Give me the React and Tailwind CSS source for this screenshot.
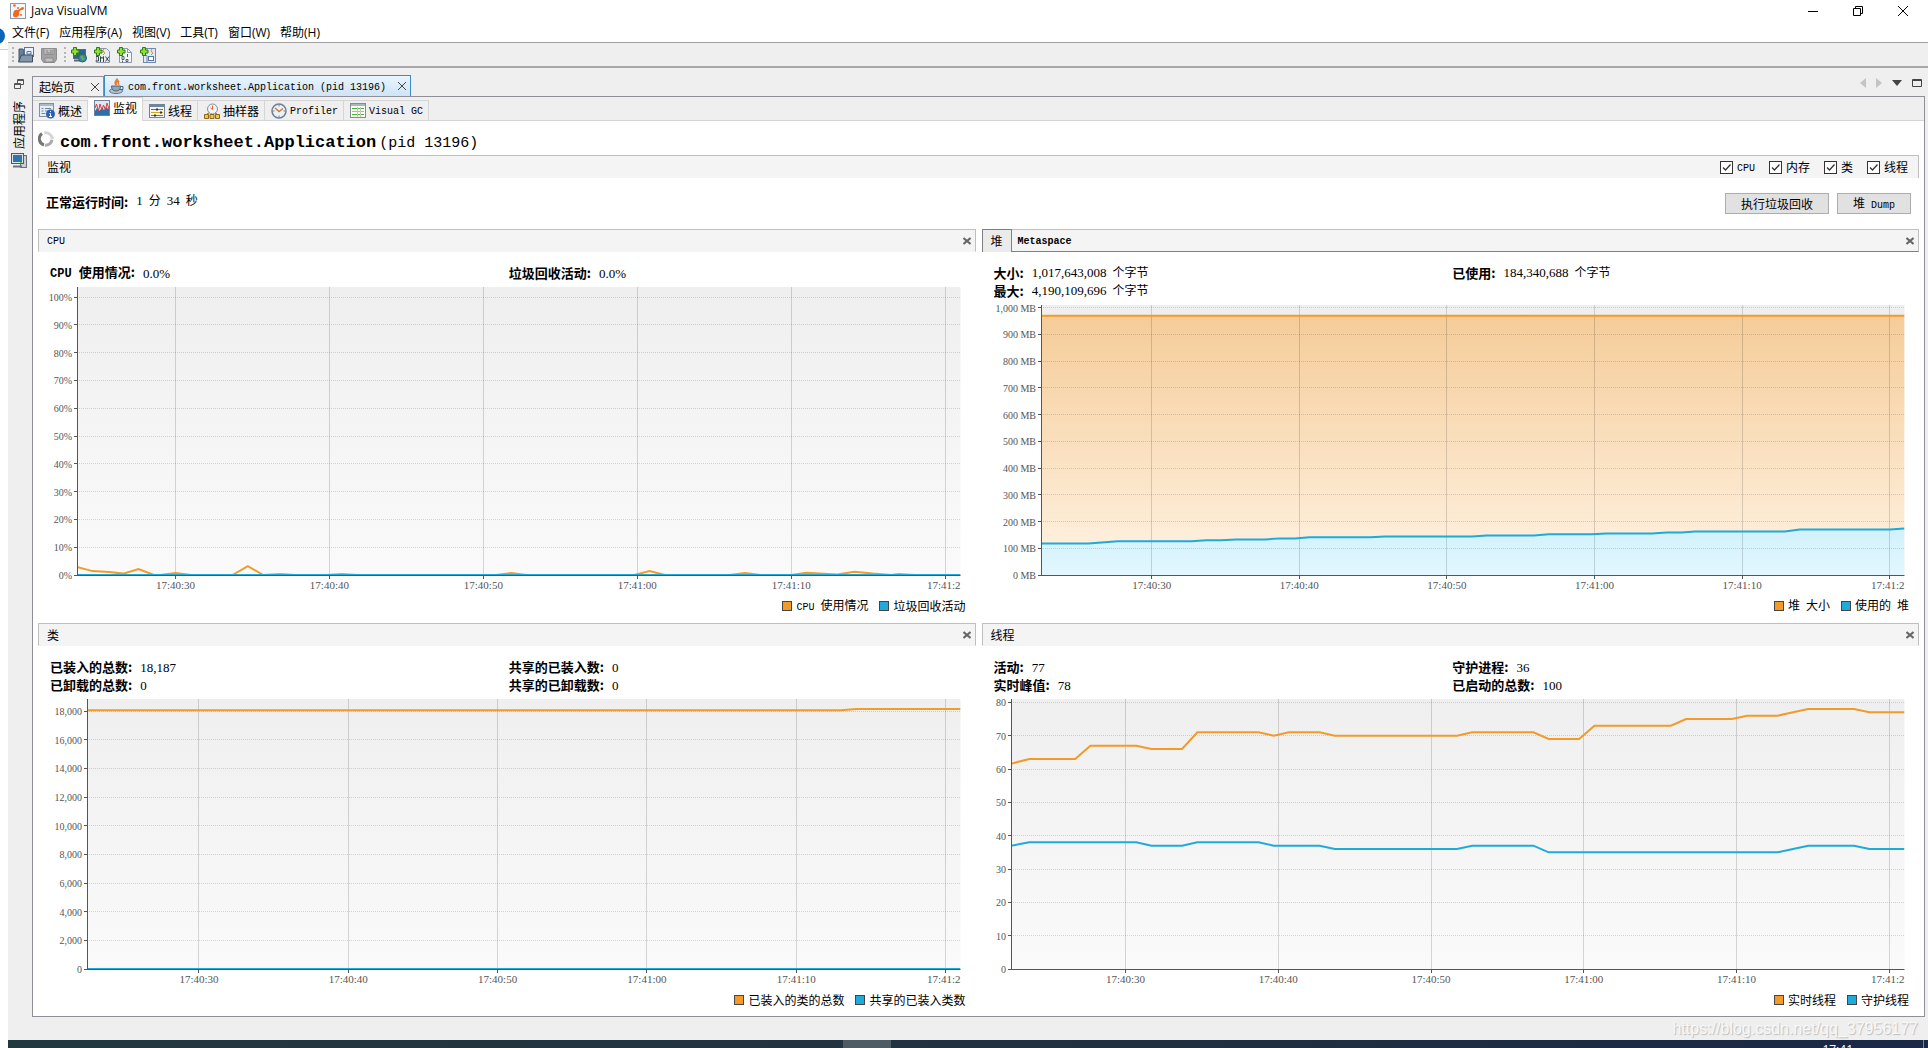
import { useId, useState } from 'react'

const ORANGE = '#f39a28'
const BLUE = '#1eaadb'

const CPU = [[23.6, 2.9], [24.6, 1.4], [25.7, 1.1], [26.6, 0.5], [27.6, 2.1], [28.6, 0], [29, 0], [30, 0.7], [31, 0], [33.7, 0], [34.7, 3.2], [35.7, 0], [36.8, 0.4], [37.8, 0], [39.8, 0], [40.8, 0.4], [41.8, 0], [50.8, 0], [51.8, 0.7], [52.8, 0], [59.8, 0], [60.8, 1.4], [61.8, 0], [66, 0], [67, 0.7], [68, 0], [70, 0], [71, 0.8], [73, 0.2], [74.1, 1.2], [75.3, 0.5], [76.5, 0], [77, 0.4], [78, 0], [81, 0]]
const GC = [[23.6, 0], [81, 0]]

const HEAP_SIZE = [[22.5, 970], [81, 970]]
const HEAP_USED = [[22.5, 118], [25.7, 118], [27.7, 126], [32.7, 126], [33.7, 130], [34.7, 130], [35.7, 133], [37.7, 133], [38.7, 137], [39.7, 137], [40.7, 141], [44.8, 141], [45.8, 144], [51.7, 144], [52.7, 148], [55.9, 148], [56.9, 152], [59.8, 152], [60.8, 155], [63.9, 155], [64.9, 159], [65.9, 159], [66.8, 163], [72.9, 163], [73.9, 170], [80, 170], [81, 174]]

const CLASSES = [[22.5, 18060], [73, 18060], [74, 18160], [81, 18160]]
const SHARED = [[22.5, 0], [81, 0]]

const LIVE = [[22.5, 61.6], [23.7, 63], [26.7, 63], [27.7, 67], [30.7, 67], [31.7, 66], [33.7, 66], [34.7, 71], [38.7, 71], [39.7, 70], [40.7, 71], [42.7, 71], [43.7, 70], [51.7, 70], [52.7, 71], [56.7, 71], [57.7, 69], [59.7, 69], [60.7, 73], [65.7, 73], [66.7, 75], [69.7, 75], [70.7, 76], [72.7, 76], [73.7, 77], [74.7, 78], [77.7, 78], [78.7, 77], [81, 77]]
const DAEMON = [[22.5, 37], [23.7, 38], [30.7, 38], [31.7, 37], [33.7, 37], [34.7, 38], [38.7, 38], [39.7, 37], [42.7, 37], [43.7, 36], [51.7, 36], [52.7, 37], [56.7, 37], [57.7, 35], [72.7, 35], [73.7, 36], [74.7, 37], [77.7, 37], [78.7, 36], [81, 36]]

const TIMES = [[30, '17:40:30'], [40, '17:40:40'], [50, '17:40:50'], [60, '17:41:00'], [70, '17:41:10']]
const LAST_TIME = 80

const range = (n, step) => Array.from({ length: n + 1 }, (_, i) => i * step)

// Latin runs are set narrower than the Chinese glyphs around them
function Mixed({ text }) {
  return text.split(/([\x20-\x7e]+)/).map((part, i) =>
    i % 2 ? <span key={i} className="font-['Liberation_Mono',monospace] text-[10px]">{part}</span> : part
  )
}

function Value({ text }) {
  return text.split(/([\d,.%]+)/).map((part, i) =>
    i % 2
      ? <span key={i} className="font-['Liberation_Serif',serif] text-[13px]">{part}</span>
      : <Mixed key={i} text={part} />
  )
}

function Chart({ label, start, max, ticks, format, series, filled, className }) {
  const id = useId()
  const end = 81
  const x = (t) => `${((t - start) / (end - start)) * 100}%`
  const y = (v) => `${(1 - v / max) * 100}%`
  const line = (pts) => pts.map(([t, v]) => `${t - start},${max - v}`).join(' ')
  const times = [...TIMES.map(([t]) => t), LAST_TIME]

  return (
    <div className={`mr-[15px] pb-[18px] ${className}`}>
      <svg role="img" aria-label={label} className="block h-full w-full overflow-visible font-['Liberation_Serif',serif]" fill="#555">
        <defs>
          <linearGradient id={`${id}bg`} x1="0" y1="0" x2="0" y2="1">
            <stop offset="0" stopColor="#efefef" />
            <stop offset="1" stopColor="#fafafa" />
          </linearGradient>
          <linearGradient id={`${id}0`} x1="0" y1="0" x2="0" y2="1">
            <stop offset="0" stopColor="#f5cc99" />
            <stop offset="1" stopColor="#fff3e4" />
          </linearGradient>
          <linearGradient id={`${id}1`} x1="0" y1="0" x2="0" y2="1">
            <stop offset="0" stopColor="#d2f1fb" />
            <stop offset="1" stopColor="#e2f7ff" />
          </linearGradient>
        </defs>
        <rect width="100%" height="100%" fill={`url(#${id}bg)`} />
        {filled && (
          <svg width="100%" height="100%" viewBox={`0 0 ${end - start} ${max}`} preserveAspectRatio="none">
            {series.map((s, i) => (
              <polygon key={i} points={`0,${max} ${line(s.points)} ${end - start},${max}`} fill={`url(#${id}${i})`} />
            ))}
          </svg>
        )}
        <g stroke="#000" strokeOpacity="0.15" shapeRendering="crispEdges">
          {ticks.map(v => <line key={v} x1="0" x2="100%" y1={y(v)} y2={y(v)} strokeDasharray="1 1" />)}
          {times.map(t => <line key={t} x1={x(t)} x2={x(t)} y1="0" y2="100%" />)}
        </g>
        <svg width="100%" height="100%" viewBox={`0 0 ${end - start} ${max}`} preserveAspectRatio="none" fill="none">
          {series.map(s => (
            <polyline key={s.name} points={line(s.points)} stroke={s.color} strokeWidth="2" vectorEffect="non-scaling-stroke" />
          ))}
        </svg>
        <rect width="1" height="100%" />
        <rect y="100%" width="100%" height="1" />
        <g stroke="#555" shapeRendering="crispEdges">
          {ticks.map(v => <line key={v} x1="-3" x2="0" y1={y(v)} y2={y(v)} />)}
          <g transform="translate(0 4)">
            {times.map(t => <line key={t} x1={x(t)} x2={x(t)} y1="99%" y2="100%" />)}
          </g>
        </g>
        {ticks.map(v => <text key={v} x="-5" y={y(v)} dy="4" textAnchor="end" fontSize="10">{format(v)}</text>)}
        <g transform="translate(0 14)" fontSize="11">
          {TIMES.map(([t, name]) => <text key={t} x={x(t)} y="100%" textAnchor="middle">{name}</text>)}
          <text x="100%" y="100%" textAnchor="end">17:41:2</text>
        </g>
      </svg>
    </div>
  )
}

function CloseMark() {
  return (
    <svg viewBox="0 0 8 8" className="size-2" stroke="#666" strokeWidth="2">
      <path d="M0.5 1l7 6M7.5 1l-7 6" />
    </svg>
  )
}

function Panel({ title, tabs, stats, children, series }) {
  return (
    <section className="flex min-w-0 flex-col">
      <header className={`flex h-[23px] items-center border border-[#bfbfbf] bg-[#f4f4f4] pr-1 ${tabs ? 'border-b-[#808080]' : 'border-b-[#f4f4f4]'}`}>
        {tabs ? (
          <>
            <button className="-my-px -ml-px h-[23px] border border-[#808080] border-b-0 bg-[#ebebeb] px-2"><Mixed text={tabs[0]} /></button>
            <button className="px-[6px] font-bold"><Mixed text={tabs[1]} /></button>
          </>
        ) : (
          <h3 className="pl-2"><Mixed text={title} /></h3>
        )}
        <button aria-label="关闭" className="ml-auto"><CloseMark /></button>
      </header>
      <dl className="grid grid-cols-2 pt-3 pr-2 pb-[5px] pl-3">
        {stats.map(([name, value]) => (
          <div key={name} className="flex h-[18px] items-center gap-2">
            <dt className="text-[13px] font-bold">
              {name.split(/([A-Z]+ )/).map((p, i) => i % 2 ? <span key={i} className="font-['Liberation_Mono',monospace] text-[12px]">{p}</span> : p)}:
            </dt>
            <dd><Value text={value} /></dd>
          </div>
        ))}
      </dl>
      {children}
      <ul className="flex h-[26px] items-center justify-end gap-[11px] pr-[10px]">
        {series.map(s => (
          <li key={s.name} className="flex items-center gap-1">
            <span className={`size-[10px] border border-[#444] ${s.color === ORANGE ? 'bg-[#f39a28]' : 'bg-[#1eaadb]'}`} />
            <span><Mixed text={s.name} /></span>
          </li>
        ))}
      </ul>
    </section>
  )
}

/* icons */

const Plus = () => (
  <path d="M2.5 0.5h3v2.500h2.500v3h-2.500v2.500h-3v-2.500H0.500v-3h2z" fill="#8fe03a" stroke="#2b7a12" />
)

const Icon = ({ children, className = 'size-4' }) => (
  <svg viewBox="0 0 16 16" className={`shrink-0 ${className}`} fill="none" aria-hidden="true">{children}</svg>
)

const LogoIcon = () => (
  <Icon>
    <rect x="0.5" y="0.5" width="15" height="15" fill="#f3f7fa" stroke="#8e9aa8" />
    <path d="M4 8q2-2 4-1l3-2q2-2 3 0 0 2-3 2l-2 2q1 4-2 5-4 1-4-2 0-2 1-4z" fill="#ef6a1f" />
    <circle cx="4.500" cy="2.500" r="1.300" fill="#ef6a1f" />
    <circle cx="8" cy="5" r="1" fill="#ef6a1f" />
    <circle cx="11" cy="12" r="1" fill="#ef6a1f" />
  </Icon>
)

const OpenIcon = () => (
  <Icon>
    <path d="M1 14V2h4l1 2v10z" fill="#6d8093" stroke="#43566a" />
    <rect x="6.500" y="0.500" width="9" height="9" fill="#eaf2fb" stroke="#5377a0" />
    <path d="M9 4.500h4v2.500h-4z" stroke="#5377a0" />
    <path d="M0.500 15l3-7h11v7z" fill="#8397a8" stroke="#3b4e61" />
  </Icon>
)

const SaveIcon = () => (
  <Icon>
    <path d="M0.500 1.500h15v11l-2 3H2.500l-2-3z" fill="#a2a2a2" stroke="#8c8c8c" />
    <path d="M3 1.500h10v6H3z" fill="#bdbdbd" stroke="#909090" />
    <path d="M5 4h2M9 4h3M5 6h7" stroke="#858585" />
    <path d="M4 11h8v4H4z" fill="#c2c2c2" stroke="#8a8a8a" />
  </Icon>
)

const AddHostIcon = () => (
  <Icon>
    <rect x="2.500" y="2.500" width="12" height="9" fill="#2c6390" stroke="#58697a" />
    <path d="M3 13.500h7" stroke="#58697a" strokeWidth="2" />
    <circle cx="11.500" cy="11" r="4" fill="#3d83b5" stroke="#2d6a4a" />
    <path d="M9 10q2-2 3-1 0 2 2 3-2 2-3 1 0-2-2-3z" fill="#62b34b" />
    <Plus />
  </Icon>
)

const AddJmxIcon = () => (
  <Icon>
    <path d="M4.500 1.500h8l3 3v11h-13v-9z" fill="#e8eef5" stroke="#8a98a8" />
    <path d="M10 2q-2 2 0 3t-1 3" stroke="#ee7b22" />
    <path d="M2 9.500h2.500v4.500H1.500M6.500 15V9.500l1.500 2 1.500-2V15M11.500 9.500l3.500 5M15 9.500l-3.500 5" stroke="#3c4650" />
    <Plus />
  </Icon>
)

const AddDumpIcon = () => (
  <Icon>
    <path d="M4.500 1.500h6l4 4v10h-12v-9z" fill="#f2f5f9" stroke="#8a98a8" />
    <path d="M10.500 1.500v4h4" stroke="#8a98a8" />
    <path d="M5 9.500h2v3H5zM10.500 7v3M5.500 13.500v2M9 12.500h2v2H9z" stroke="#4f6478" />
    <Plus />
  </Icon>
)

const AddSnapshotIcon = () => (
  <Icon>
    <rect x="3.500" y="1.500" width="12" height="14" fill="#dfe9f5" stroke="#6f8bad" />
    <path d="M12 2q-2 2 0 3t-1 3" stroke="#ee7b22" />
    <rect x="8.500" y="9.500" width="5" height="4" fill="#fff" stroke="#5377a0" />
    <path d="M3 8.500h4v7" stroke="#6f8bad" />
    <Plus />
  </Icon>
)

const JavaIcon = () => (
  <Icon>
    <path d="M8 0q-4 4-2 7h2q-1-2 1-3t-1-4z" fill="#ee7b22" />
    <path d="M10 3q-2 2 0 4" stroke="#e05a10" />
    <ellipse cx="7" cy="13" rx="6.500" ry="2.500" fill="#b9c6d1" stroke="#5c7387" />
    <path d="M2.500 8h9q0 5-4.500 5t-4.500-5z" fill="#8fa7ba" stroke="#4d667b" />
    <path d="M11.500 8.500h2.500v3h-3" stroke="#4d667b" />
  </Icon>
)

const OverviewIcon = () => (
  <Icon>
    <rect x="0.500" y="0.500" width="14" height="13" fill="#e6edf5" stroke="#7d90a5" />
    <path d="M1 2h13" stroke="#a8b9cc" strokeWidth="2" />
    <path d="M2.500 5.500h2M6 5.500h6M2.500 8h2M6 8h3M2.500 10.500h4" stroke="#71859a" />
    <circle cx="11.500" cy="11" r="4.500" fill="#2a63ad" />
    <path d="M11.500 8v1M10.500 10.500h1v3M10 13.500h3" stroke="#fff" />
  </Icon>
)

const MonitorIcon = () => (
  <Icon>
    <rect x="0.500" y="0.500" width="15" height="15" fill="#dce8f4" stroke="#6f8297" />
    <path d="M1 11l2-3 2 3 3-3 2 2 2-3 2 2 1-1v7H1z" fill="#2f6fa8" />
    <path d="M1 8l1.500-4 2 7 1.500-7 2 6 1.500-5 2 5 1.500-7 2 6" stroke="#dd3b3b" />
  </Icon>
)

const ThreadsIcon = () => (
  <Icon>
    <rect x="0.500" y="1.500" width="15" height="13" fill="#f3f4ee" stroke="#70859b" />
    <path d="M1 3h14" stroke="#70859b" strokeWidth="2" />
    <path d="M2 6.500h12M2 12.500h12" stroke="#3f9a2f" />
    <path d="M2 9.500h12" stroke="#d4a917" />
    <path d="M7 6.500h2M11 9.500h2M5 12.500h2" stroke="#333" strokeWidth="2" />
  </Icon>
)

const SamplerIcon = () => (
  <Icon>
    <circle cx="8.500" cy="6" r="5" fill="#eff3f8" stroke="#8092a6" />
    <path d="M8.500 2.500V6.500L6.500 5" stroke="#e06a20" />
    <path d="M3 11l2-1M13 11l-2-1" stroke="#8d6718" />
    <path d="M0.500 11.500h4v4h-4zM6 11.500h4v4H6zM11.500 11.500h4v4h-4z" fill="#f1c84c" stroke="#8d6718" />
  </Icon>
)

const ProfilerIcon = () => (
  <Icon>
    <circle cx="8" cy="8" r="7" fill="#e9f1f9" stroke="#6d7f93" strokeWidth="1.500" />
    <path d="M8 2v1.500M8 12.500V14M2 8h1.500M12.500 8H14" stroke="#6d7f93" />
    <path d="M4 5L8 8.500l4-3" stroke="#e2702c" strokeWidth="1.500" />
  </Icon>
)

const VisualGcIcon = () => (
  <Icon>
    <rect x="0.500" y="0.500" width="15" height="14" fill="#fbfbf5" stroke="#828c94" />
    <path d="M1 2h14" stroke="#a9b6c2" strokeWidth="2" />
    <path d="M2 5.500h12" stroke="#49b33a" />
    <path d="M2 8.500h12" stroke="#e4b523" />
    <path d="M2 11.500h12" stroke="#49b33a" />
    <path d="M7.500 4v10M10.500 4v10" stroke="#c8c8c0" />
  </Icon>
)

const ComputerIcon = () => (
  <Icon>
    <rect x="9.500" y="2.500" width="6" height="12" fill="#c9ced3" stroke="#6a737c" />
    <rect x="0.500" y="0.500" width="12" height="10" fill="#dfe3e6" stroke="#4d5a66" />
    <rect x="2" y="2" width="9" height="7" fill="#2f74ad" />
    <path d="M2 13.500h9" stroke="#6a737c" strokeWidth="2" />
    <path d="M9 9.500h2" stroke="#5fd43b" />
  </Icon>
)

const MENU = ['文件(F)', '应用程序(A)', '视图(V)', '工具(T)', '窗口(W)', '帮助(H)']

const VIEWS = [
  ['概述', OverviewIcon],
  ['监视', MonitorIcon],
  ['线程', ThreadsIcon],
  ['抽样器', SamplerIcon],
  ['Profiler', ProfilerIcon],
  ['Visual GC', VisualGcIcon],
]

function Check({ label }) {
  const [on, setOn] = useState(true)
  return (
    <label className="flex items-center gap-1">
      <span className="grid size-[13px]">
        <input type="checkbox" checked={on} onChange={(e) => setOn(e.target.checked)} className="size-[13px] appearance-none border border-[#333] bg-white [grid-area:1/1]" />
        {on && (
          <svg viewBox="0 0 13 13" className="pointer-events-none size-[13px] [grid-area:1/1]" fill="none" stroke="#333">
            <path d="M3 6.500l2.500 2.500L10.500 3.500" strokeWidth="1.300" />
          </svg>
        )}
      </span>
      <span><Mixed text={label} /></span>
    </label>
  )
}

const Grip = () => <span className="h-[15px] border-l-2 border-dotted border-[#b5b5b5]" />

export default function App() {
  const cpu = [{ name: 'CPU 使用情况', color: ORANGE, points: CPU }, { name: '垃圾回收活动', color: BLUE, points: GC }]
  const heap = [{ name: '堆 大小', color: ORANGE, points: HEAP_SIZE }, { name: '使用的 堆', color: BLUE, points: HEAP_USED }]
  const classes = [{ name: '已装入的类的总数', color: ORANGE, points: CLASSES }, { name: '共享的已装入类数', color: BLUE, points: SHARED }]
  const threads = [{ name: '实时线程', color: ORANGE, points: LIVE }, { name: '守护线程', color: BLUE, points: DAEMON }]

  return (
    <div className="flex min-h-screen overflow-hidden bg-white font-['Noto_Sans_CJK_SC',sans-serif] text-[12px] leading-[18px] text-black">
      <div className="w-2 shrink-0 overflow-hidden pt-7">
        <div className="-ml-[11px] size-4 rounded-full bg-[#0a64b8]" />
        <div className="mt-[5px] h-px bg-[#d0d0d0]" />
      </div>

      <div className="flex min-w-0 flex-1 flex-col bg-[#efefef]">
        <div className="flex h-[22px] items-center bg-white pr-5 pl-[2px] font-['Open_Sans',sans-serif]">
          <LogoIcon />
          <h1 className="ml-[5px]">Java VisualVM</h1>
          <div className="ml-auto flex items-center gap-[35px]">
            <button aria-label="最小化"><svg viewBox="0 0 10 10" className="size-[10px]" stroke="#000"><path d="M0 5.500h10" /></svg></button>
            <button aria-label="还原"><svg viewBox="0 0 10 10" className="size-[10px]" fill="none" stroke="#000"><path d="M0.500 2.500h7v7h-7zM2.500 2.500v-2h7v7h-2" /></svg></button>
            <button aria-label="关闭"><svg viewBox="0 0 10 10" className="size-[10px]" stroke="#000"><path d="M0 0l10 10M10 0L0 10" /></svg></button>
          </div>
        </div>
        <nav className="flex h-5 items-center gap-[10px] bg-white pt-[2px] pl-1 font-['Open_Sans','Noto_Sans_CJK_SC',sans-serif]">
          {MENU.map(m => <button key={m} className="whitespace-nowrap">{m}</button>)}
        </nav>

        <div className="flex h-[26px] items-center border-t border-b-2 border-t-[#a0a0a0] border-b-[#a8a8a8] pl-1">
          <Grip />
          <button aria-label="打开" className="ml-1"><OpenIcon /></button>
          <button aria-label="保存" className="ml-[7px]"><SaveIcon /></button>
          <span className="ml-[7px] flex"><Grip /></span>
          <div className="ml-[5px] flex gap-[7px]">
            <button aria-label="添加远程主机"><AddHostIcon /></button>
            <button aria-label="添加 JMX 连接"><AddJmxIcon /></button>
            <button aria-label="添加 VM 核心 dump"><AddDumpIcon /></button>
            <button aria-label="添加快照"><AddSnapshotIcon /></button>
          </div>
        </div>

        <div className="flex flex-1 pr-[3px]">
          <aside className="flex w-6 shrink-0 flex-col items-center pt-[11px] pr-[2px]">
            <button aria-label="还原窗口组">
              <svg viewBox="0 0 10 10" className="size-[10px]" fill="none" stroke="#555">
                <path d="M3.500 0.500h6v5h-6zM0.500 4.500h6v5h-6z" fill="#efefef" /><path d="M3 1.500h7M0 5.500h7" />
              </svg>
            </button>
            <button className="mt-3 flex flex-col items-center gap-1">
              <span className="rotate-180 [writing-mode:vertical-rl] [text-orientation:sideways]">应用程序</span>
              <ComputerIcon />
            </button>
          </aside>

          <div className="flex min-w-0 flex-1 flex-col">
            <div className="flex h-7 items-end">
              <div className="flex h-5 w-[72px] items-center border border-b-0 border-[#8e8f99] bg-[#f0f0f0] pr-1 pl-[6px]">
                <button>起始页</button>
                <button aria-label="关闭" className="ml-auto"><svg viewBox="0 0 8 8" className="size-2" stroke="#444"><path d="M0 0l8 8M8 0L0 8" /></svg></button>
              </div>
              <div className="flex h-[21px] w-[307px] items-center border border-b-0 border-[#3c8cc8] bg-linear-to-b from-[#e9f5fe] to-[#cfe4f6] pr-1 pl-1">
                <JavaIcon />
                <button className="ml-[3px] whitespace-nowrap"><Mixed text="com.front.worksheet.Application (pid 13196)" /></button>
                <button aria-label="关闭" className="ml-auto"><svg viewBox="0 0 8 8" className="size-2" stroke="#444"><path d="M0 0l8 8M8 0L0 8" /></svg></button>
              </div>
              <div className="mr-[3px] mb-2 ml-auto flex items-center gap-[10px]">
                <button aria-label="向左滚动"><svg viewBox="0 0 6 10" className="h-[10px] w-[6px]" fill="#c4c4c4"><path d="M6 0v10L0 5z" /></svg></button>
                <button aria-label="向右滚动"><svg viewBox="0 0 6 10" className="h-[10px] w-[6px]" fill="#c4c4c4"><path d="M0 0v10l6-5z" /></svg></button>
                <button aria-label="显示列表"><svg viewBox="0 0 10 6" className="h-[6px] w-[10px]" fill="#444"><path d="M0 0h10L5 6z" /></svg></button>
                <button aria-label="最大化"><svg viewBox="0 0 10 8" className="h-2 w-[10px]" fill="none" stroke="#444"><path d="M0.500 0.500h9v7h-9zM0 1.500h10" /></svg></button>
              </div>
            </div>

            <main className="flex flex-1 flex-col border border-[#8e8f99] bg-white">
              <div className="flex h-6 items-end border-b border-[#d5d5d5] bg-[#efefef]">
                {VIEWS.map(([name, ViewIcon], i) => (
                  <button
                    key={name}
                    className={`flex items-center gap-[3px] whitespace-nowrap border-t border-r border-[#d5d5d5] pr-[5px] pl-[6px] ${i === 1 ? '-mb-px h-6 bg-white pb-1' : 'h-5'}`}
                  >
                    <ViewIcon />
                    <span><Mixed text={name} /></span>
                  </button>
                ))}
              </div>

              <div className="flex h-[34px] items-center pt-[10px] pl-[5px] font-['Liberation_Mono',monospace]">
                <svg viewBox="0 0 16 16" className="mb-2 size-4" fill="none" strokeWidth="3">
                  <path d="M4 2.500a6.500 6.500 0 0 0 2 11.500" stroke="#777" />
                  <path d="M7 14.300a6.500 6.500 0 0 0 7-5.500" stroke="#aaa" />
                  <path d="M14.300 8a6.500 6.500 0 0 0-8-6" stroke="#d5d5d5" />
                </svg>
                <h2 className="ml-[6px] flex items-baseline gap-[3px] text-[17px] font-bold">
                  com.front.worksheet.Application
                  <span className="text-[15px] font-normal">(pid 13196)</span>
                </h2>
              </div>

              <div className="mr-[5px] ml-[5px] flex flex-1 flex-col">
                <div className="flex h-[23px] items-center justify-between border border-b-0 border-[#bfbfbf] bg-[#f4f4f4] pr-[10px] pl-2">
                  <h3>监视</h3>
                  <div className="flex gap-[14px]">
                    {['CPU', '内存', '类', '线程'].map(l => <Check key={l} label={l} />)}
                  </div>
                </div>

                <div className="flex h-[51px] items-center justify-between pr-2 pl-2">
                  <p className="flex items-center gap-2 pb-1">
                    <b className="text-[13px]">正常运行时间:</b>
                    <span><Value text="1 分 34 秒" /></span>
                  </p>
                  <div className="flex gap-2">
                    <button className="h-[21px] border border-[#adadad] bg-[#e1e1e1] px-[15px]">执行垃圾回收</button>
                    <button className="h-[21px] border border-[#adadad] bg-[#e1e1e1] px-[15px]"><Mixed text="堆 Dump" /></button>
                  </div>
                </div>

                <div className="grid grid-cols-2 gap-x-[6px] gap-y-1">
                  <Panel title="CPU" stats={[['CPU 使用情况', '0.0%'], ['垃圾回收活动', '0.0%']]} series={cpu}>
                    <Chart label="CPU" className="h-[306px] pl-[39px]" start={23.6} max={103.6} ticks={range(10, 10)} format={v => `${v}%`} series={cpu} />
                  </Panel>
                  <Panel tabs={['堆', 'Metaspace']} stats={[['大小', '1,017,643,008 个字节'], ['已使用', '184,340,688 个字节'], ['最大', '4,190,109,696 个字节']]} series={heap}>
                    <Chart label="堆" className="h-[288px] pl-[59px]" start={22.5} max={1010} ticks={range(10, 100)} format={v => `${v.toLocaleString('en-US')} MB`} series={heap} filled />
                  </Panel>
                  <Panel title="类" stats={[['已装入的总数', '18,187'], ['共享的已装入数', '0'], ['已卸载的总数', '0'], ['共享的已卸载数', '0']]} series={classes}>
                    <Chart label="类" className="h-[288px] pl-[49px]" start={22.5} max={18850} ticks={range(9, 2000)} format={v => v.toLocaleString('en-US')} series={classes} />
                  </Panel>
                  <Panel title="线程" stats={[['活动', '77'], ['守护进程', '36'], ['实时峰值', '78'], ['已启动的总数', '100']]} series={threads}>
                    <Chart label="线程" className="h-[288px] pl-[29px]" start={22.5} max={81} ticks={range(8, 10)} format={v => v} series={threads} />
                  </Panel>
                </div>
              </div>
            </main>
          </div>
        </div>

        <p className="h-[23px] pr-[10px] text-right font-['Liberation_Sans',sans-serif] text-[16px] leading-6 text-[#f8f8f8] [text-shadow:1px_1px_1px_#bbb]">
          https://blog.csdn.net/qq_37956177
        </p>
        <footer className="flex h-2 overflow-hidden bg-linear-to-r from-[#22383f] via-[#20323f] to-[#1a2747]">
          <div className="w-[43.500%]" />
          <div className="w-12 bg-[#4c5b64]" />
          <time className="mr-[70px] ml-auto pt-[2px] font-['Open_Sans',sans-serif] text-[12px] leading-4 text-white">17:41</time>
          <div className="mr-1 w-px bg-[#7b8597]" />
        </footer>
      </div>
    </div>
  )
}
